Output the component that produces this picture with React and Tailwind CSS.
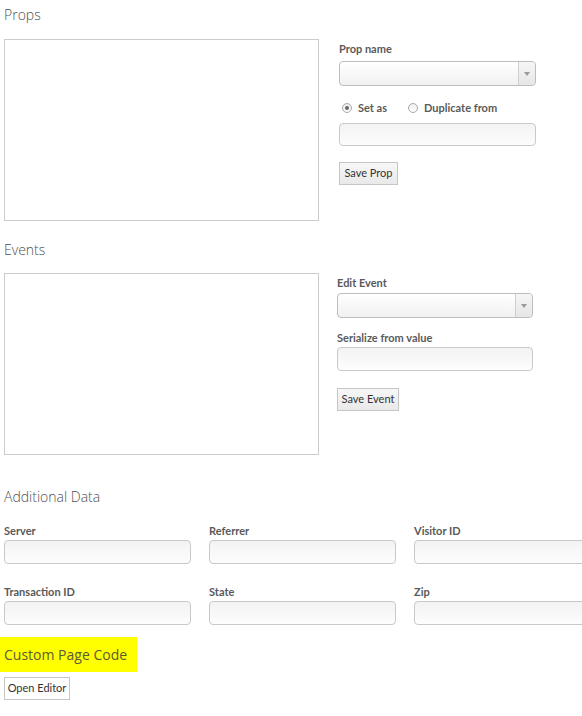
import React from "react";

const headFont = { fontFamily: "'Open Sans', 'Noto Sans', sans-serif" };

function Heading({ children, className = "" }) {
  return (
    <div
      className={`text-[14px] leading-[20px] font-light text-[#4f4f4f] pl-[4px] ${className}`}
      style={headFont}
    >
      {children}
    </div>
  );
}

function Label({ children, className = "" }) {
  return (
    <div className={`text-[11px] leading-[13px] font-bold text-[#5a5a5a] ${className}`}>
      {children}
    </div>
  );
}

function TextInput({ className = "" }) {
  return (
    <div
      className={`h-[23px] rounded-[4px] border border-[#c9c9c9] bg-gradient-to-b from-[#f3f3f3] to-[#fdfdfd] ${className}`}
    />
  );
}

function Select({ className = "" }) {
  return (
    <div
      className={`h-[25px] flex rounded-[4px] border border-[#bdbdbd] bg-gradient-to-b from-white to-[#f1f1f1] ${className}`}
    >
      <div className="flex-1" />
      <div className="w-[17px] border-l border-[#cfcfcf] flex items-center justify-center bg-gradient-to-b from-[#f6f6f6] to-[#e6e6e6] rounded-r-[4px]">
        <svg width="6" height="4" viewBox="0 0 6 4">
          <path d="M0 0 L6 0 L3 4 Z" fill="#9a9a9a" />
        </svg>
      </div>
    </div>
  );
}

function Button({ children, className = "" }) {
  return (
    <div
      className={`h-[23px] flex items-center justify-center border border-[#c6c6c6] bg-gradient-to-b from-[#f7f7f7] to-[#e9e9e9] text-[11px] text-[#333] ${className}`}
    >
      {children}
    </div>
  );
}

function Radio({ checked }) {
  return (
    <div className="w-[10px] h-[10px] rounded-full border border-[#a9a9a9] bg-gradient-to-b from-[#eeeeee] to-white flex items-center justify-center">
      {checked && <div className="w-[4px] h-[4px] rounded-full bg-[#666]" />}
    </div>
  );
}

export default function App() {
  return (
    <div
      className="w-[582px] h-[716px] overflow-hidden bg-white relative"
      style={{ fontFamily: "Lato, 'Liberation Sans', sans-serif" }}
    >
      {/* Props */}
      <Heading className="pt-[5px]">Props</Heading>
      <div className="flex mt-[14px]">
        <div className="ml-[4px] w-[315px] h-[182px] border border-[#cccccc] shrink-0" />
        <div className="ml-[20px] w-[197px] pt-[3px]">
          <Label>Prop name</Label>
          <Select className="mt-[6px]" />
          <div className="flex items-center h-[14px] mt-[15px] pl-[3px]">
            <Radio checked />
            <span className="ml-[6px] text-[11px] font-bold text-[#5a5a5a]">Set as</span>
            <div className="ml-[21px]">
              <Radio />
            </div>
            <span className="ml-[6px] text-[11px] font-bold text-[#5a5a5a]">Duplicate from</span>
          </div>
          <TextInput className="mt-[8px]" />
          <Button className="mt-[16px] w-[59px]">Save Prop</Button>
        </div>
      </div>

      {/* Events */}
      <Heading className="mt-[19px]">Events</Heading>
      <div className="flex mt-[13px]">
        <div className="ml-[4px] w-[315px] h-[182px] border border-[#cccccc] shrink-0" />
        <div className="ml-[18px] w-[196px] pt-[3px]">
          <Label>Edit Event</Label>
          <Select className="mt-[4px]" />
          <Label className="mt-[13px]">Serialize from value</Label>
          <TextInput className="mt-[3px] h-[24px]" />
          <Button className="mt-[17px] w-[62px]">Save Event</Button>
        </div>
      </div>

      {/* Additional Data */}
      <Heading className="mt-[32px]">Additional Data</Heading>
      <div className="grid grid-cols-[187px_187px_187px] gap-x-[18px] gap-y-[21px] pl-[4px] mt-[17px]">
        {["Server", "Referrer", "Visitor ID", "Transaction ID", "State", "Zip"].map((l) => (
          <div key={l}>
            <Label>{l}</Label>
            <TextInput className="mt-[3px] h-[24px]" />
          </div>
        ))}
      </div>

      {/* Custom Page Code */}
      <div className="mt-[12px] w-[137px] h-[35px] bg-[#ffff00] flex items-center">
        <span
          className="pl-[4px] text-[14px] whitespace-nowrap text-[#5b5b3a]"
          style={headFont}
        >
          Custom Page Code
        </span>
      </div>
      <div className="mt-[5px] ml-[4px] flex h-[23px] w-[66px] items-center justify-center border border-[#c6c6c6] bg-white text-[11px] text-[#333]">
        Open Editor
      </div>
    </div>
  );
}
